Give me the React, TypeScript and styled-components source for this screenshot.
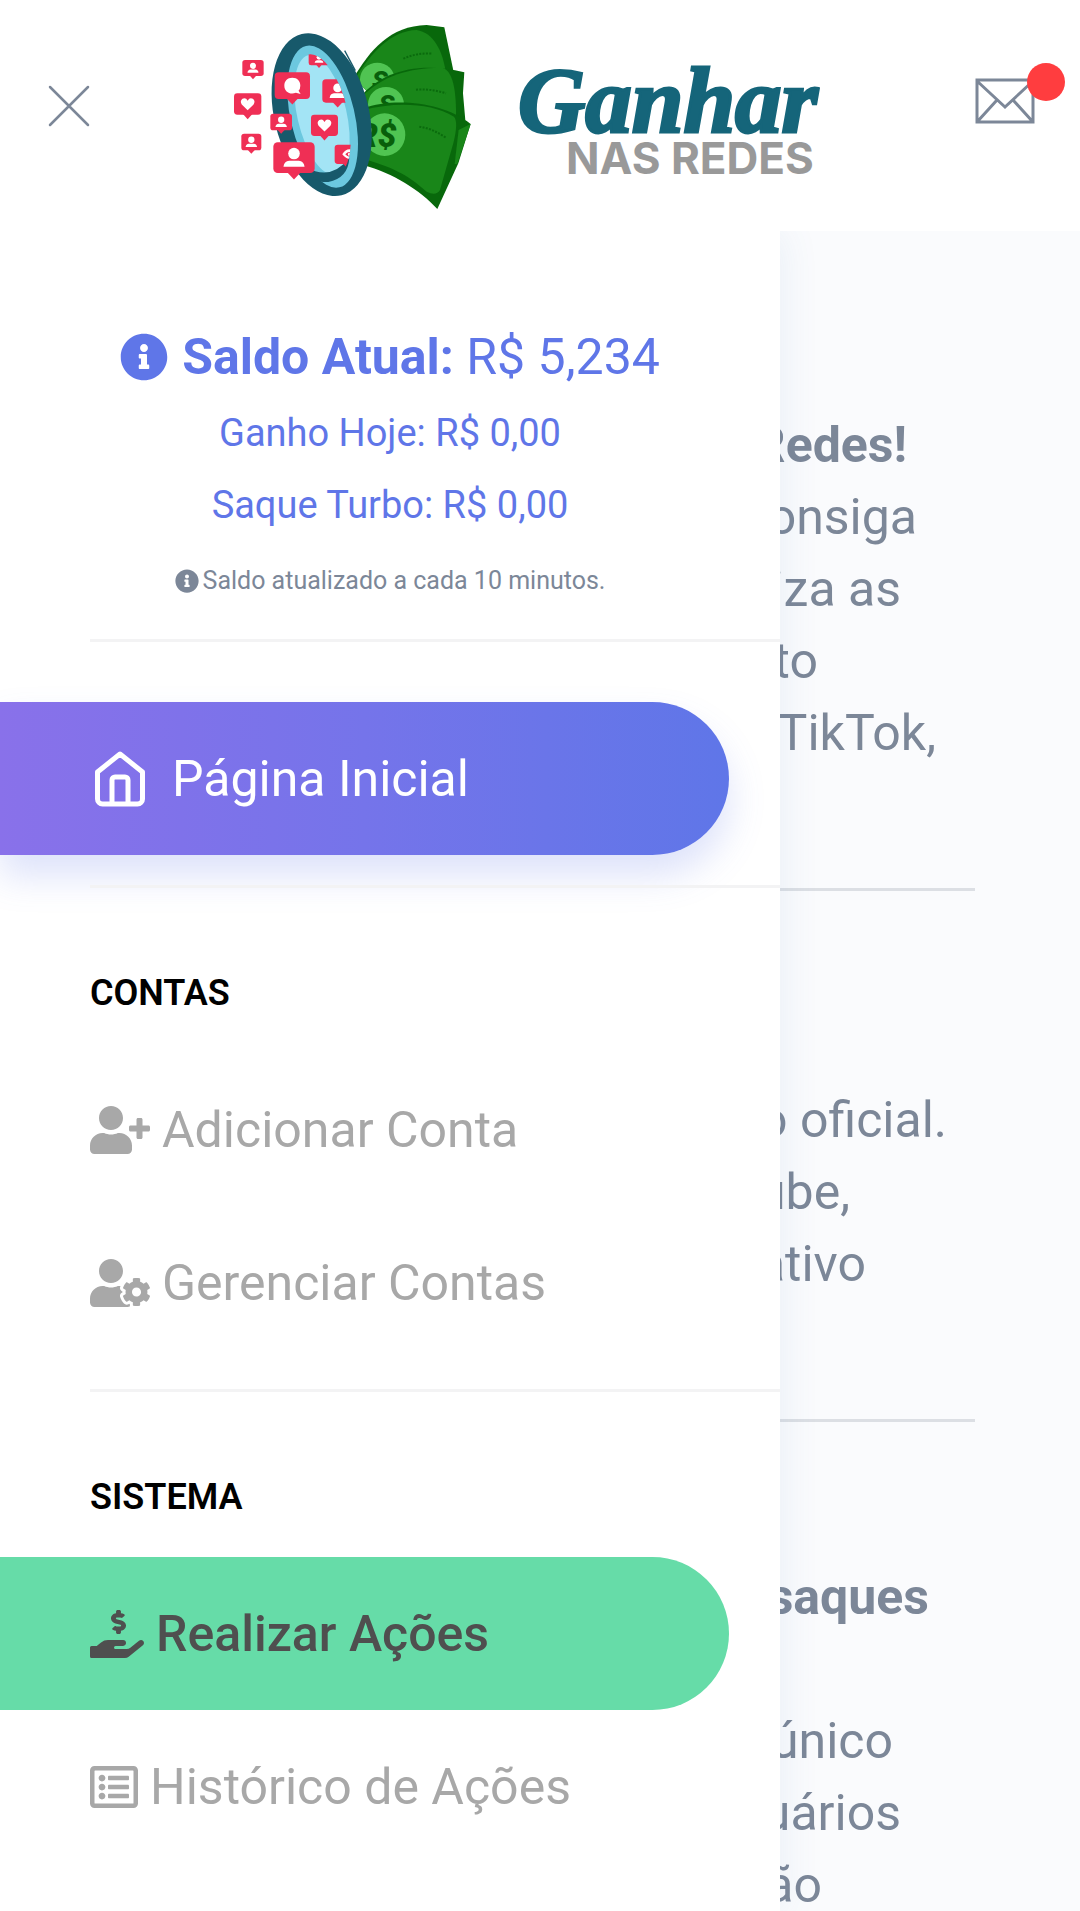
import React from "react";
import styled, { createGlobalStyle, css } from "styled-components";
import {
  FaHandHoldingUsd,
  FaInfoCircle,
  FaRegListAlt,
  FaUserCog,
  FaUserPlus,
} from "react-icons/fa";

const colors = {
  primary: "#5f76e8",
  muted: "#7c8798",
  item: "#a8a8a8",
  line: "#f3f3f4",
  teal: "#15657a",
  danger: "#ff3d3f",
  success: "#66dca8",
};

const size = { title: 50, text: 38, small: 25 };

const GlobalStyle = createGlobalStyle`
  *, *::before, *::after { box-sizing: border-box; }
  body {
    margin: 0;
    background: #fafbfd;
    color: ${colors.muted};
    font-family: Roboto, "Liberation Sans", sans-serif;
  }
`;

const Page = styled.div`
  display: flex;
  flex-direction: column;
  height: 100vh;
  overflow: hidden;
`;

const Header = styled.header`
  display: flex;
  flex: none;
  align-items: center;
  justify-content: space-between;
  height: 231px;
  padding: 0 45px 0 48px;
  background: #fff;
`;

const IconButton = styled.button<{ $lift: number }>`
  position: relative;
  display: flex;
  margin: 0 0 ${(p) => p.$lift}px;
  padding: 0;
  border: 0;
  background: none;
  color: ${colors.muted};
  cursor: pointer;
`;

const Badge = styled.span`
  position: absolute;
  top: -15px;
  right: -30px;
  width: 38px;
  height: 38px;
  border-radius: 50%;
  background: ${colors.danger};
`;

const LogoLink = styled.a`
  display: flex;
`;

const Body = styled.div`
  position: relative;
  flex: 1;
  min-height: 0;
  overflow: hidden;
`;

const Sidebar = styled.aside`
  position: absolute;
  inset: 0 auto 0 0;
  width: 780px;
  max-width: 100%;
  overflow: hidden;
  background: #fff;
  box-shadow: 3px 0 36px rgba(70, 120, 180, 0.09);
`;

const Balance = styled.section`
  display: flex;
  flex-direction: column;
  align-items: center;
  padding: 90px 0 22px;
  color: ${colors.primary};
`;

const BalanceRow = styled.p<{ $small?: boolean; $lead?: boolean }>`
  display: flex;
  align-items: center;
  gap: 14px;
  margin: 0;
  font-size: ${size.text}px;
  line-height: 72px;
  ${(p) =>
    p.$lead &&
    css`
      margin-bottom: 4px;
      font-size: ${size.title}px;
    `}
  ${(p) =>
    p.$small &&
    css`
      gap: 4px;
      margin-top: 4px;
      color: ${colors.muted};
      font-size: ${size.small}px;
    `}
`;

const Divider = styled.hr`
  height: 3px;
  margin: 0 0 0 90px;
  border: 0;
  background: ${colors.line};
`;

const Menu = styled.ul`
  margin: 0;
  padding: 0;
  list-style: none;
`;

const MenuBlock = styled.nav<{ $top?: number }>`
  padding: ${(p) => p.$top ?? 0}px 0 30px;
`;

const Heading = styled.h2`
  margin: 0;
  padding: 78px 90px 33px;
  color: #000;
  font-size: 36px;
  font-weight: 600;
  line-height: 54px;
`;

const MenuLink = styled.a<{ $tone?: "active" | "success"; $icon?: number }>`
  display: flex;
  align-items: center;
  gap: 12px;
  height: 153px;
  margin-right: 51px;
  padding-left: 90px;
  border-radius: 0 77px 77px 0;
  color: ${colors.item};
  font-size: ${size.title}px;
  text-decoration: none;

  & > svg {
    flex: none;
    width: ${(p) => p.$icon ?? 48}px;
    height: 48px;
  }
  ${(p) =>
    p.$tone === "active" &&
    css`
      gap: 22px;
      background: linear-gradient(to right, #8971ea, #7f72ea, #7574ea, #6a75e9, #5f76e8);
      box-shadow: 0 21px 36px rgba(95, 118, 232, 0.21);
      color: #fff;

      & > svg {
        height: 60px;
      }
    `}
  ${(p) =>
    p.$tone === "success" &&
    css`
      background: ${colors.success};
      color: #4f4f4f;
      font-weight: 500;
    `}
`;

const Content = styled.main`
  padding: 0 105px;
`;

const Paragraph = styled.div<{ $top: number }>`
  padding-top: ${(p) => p.$top}px;
  font-size: ${size.title}px;
  line-height: 72px;
  text-align: right;
`;

const Line = styled.div<{ $rag: number }>`
  min-height: 72px;
  padding-right: ${(p) => p.$rag}px;
`;

const Rule = styled.hr`
  height: 3px;
  margin: 119px 0 0;
  border: 0;
  background: #dcdfe4;
`;

type PinKind = "person" | "heart" | "chat" | "eye";

function Pin({ x, y, w, h, kind }: { x: number; y: number; w: number; h: number; kind: PinKind }) {
  const cx = x + w / 2;
  const cy = y + h / 2;
  const s = h / 90;
  return (
    <g>
      <rect x={x} y={y} width={w} height={h} rx={10 * s + 3} fill="#ef2f55" />
      <path d={`M${cx - 20 * s} ${y + h - 2} L${cx} ${y + h + 19 * s} L${cx + 20 * s} ${y + h - 2}Z`} fill="#ef2f55" />
      <g transform={`translate(${cx} ${cy}) scale(${s})`} fill="#fff">
        {kind === "person" && (
          <>
            <circle cy="-12" r="17" />
            <path d="M-31 27 Q-29 10 -14 9 L14 9 Q29 10 31 27Z" />
          </>
        )}
        {kind === "heart" && (
          <path d="M0 26 L-25 2 Q-34 -13 -22 -22 Q-8 -29 0 -14 Q8 -29 22 -22 Q34 -13 25 2Z" />
        )}
        {kind === "chat" && (
          <path d="M0 -27 C17 -27 27 -16 27 0 Q27 11 21 17 L28 28 L12 24 C-8 32 -27 20 -27 0 C-27 -16 -17 -27 0 -27Z" />
        )}
        {kind === "eye" && (
          <path
            fillRule="evenodd"
            d="M-22 0 Q2 -38 36 -14 L36 16 Q4 34 -22 0Z M-8 0 Q8 18 24 6 L24 -6 Q8 -18 -8 0Z M4 0 a7 7 0 1 0 14 0 a7 7 0 1 0 -14 0Z"
          />
        )}
      </g>
    </g>
  );
}

function Logo() {
  return (
    <svg width="605" height="231" viewBox="230 0 605 231" role="img" aria-label="Ganhar nas Redes">
      <defs>
        <clipPath id="glass">
          <ellipse cx="306" cy="315" rx="78" ry="186" transform="rotate(-13 306 315)" />
        </clipPath>
        <clipPath id="bill-top">
          <path d="M400 205 C450 120 510 48 620 45 L673 52 L704 200 L500 300Z" />
        </clipPath>
        <clipPath id="bill-mid">
          <path d="M420 262 C490 180 600 155 733 187 L729 250 L736 330 L440 340Z" />
        </clipPath>
      </defs>
      <g transform="translate(220 10) scale(0.3333)">
        <path d="M400 205 C450 120 510 48 620 45 L673 52 L704 200 L500 300Z" fill="#08680b" />
        <path d="M404 208 C455 125 515 62 590 60 C640 68 668 120 678 190 L500 300Z" fill="#198619" />
        <g clipPath="url(#bill-top)">
          <ellipse cx="472" cy="208" rx="52" ry="50" fill="#50c452" />
          <text x="456" y="236" fontFamily="Roboto, sans-serif" fontSize="78" fontWeight="900" fontStyle="italic" fill="#085f0b">S</text>
        </g>
        <path d="M550 146 Q590 128 636 131" fill="none" stroke="#0a6b0d" strokeWidth="6" strokeDasharray="6 4" />

        <path d="M420 262 C490 180 600 155 733 187 L729 250 L736 330 L440 340Z" fill="#08680b" />
        <path d="M424 262 C490 192 580 172 668 174 C698 182 710 240 708 330 L440 340Z" fill="#198619" />
        <g clipPath="url(#bill-mid)">
          <ellipse cx="498" cy="283" rx="54" ry="52" fill="#50c452" />
          <text x="476" y="308" fontFamily="Roboto, sans-serif" fontSize="78" fontWeight="900" fontStyle="italic" fill="#085f0b">S</text>
        </g>
        <path d="M588 239 Q634 236 678 250" fill="none" stroke="#0a6b0d" strokeWidth="6" strokeDasharray="6 4" />

        <path d="M430 295 C520 262 670 275 752 342 L715 460 L652 597 C600 540 520 490 430 465Z" fill="#08680b" />
        <path d="M716 360 L752 342 L712 462 L704 462Z" fill="#198619" />
        <path d="M430 300 C520 276 630 276 702 320 Q716 335 700 400 L660 540 Q648 560 620 545 C560 490 510 470 430 446Z" fill="#198619" />
        <ellipse cx="494" cy="374" rx="62" ry="64" fill="#50c452" />
        <text x="410" y="410" fontFamily="Roboto, sans-serif" fontSize="100" fontWeight="900" fontStyle="italic" fill="#085f0b">R$</text>
        <path d="M598 350 Q640 356 680 385" fill="none" stroke="#0a6b0d" strokeWidth="6" strokeDasharray="6 4" />

        <path d="M374 122 L406 182" stroke="#17596b" strokeWidth="4" />
        <ellipse cx="305" cy="314" rx="142" ry="249" transform="rotate(-13.9 305 314)" fill="#17596b" />
        <ellipse cx="308" cy="320" rx="96" ry="218" transform="rotate(-13.3 308 320)" fill="#6cc8df" />
        <ellipse cx="306" cy="315" rx="74" ry="184" transform="rotate(-13 306 315)" fill="#a3e4f5" />
        <path d="M258 470 Q330 515 388 445 Q384 505 325 516 Q280 520 258 470Z" fill="#17596b" />
        <g clipPath="url(#glass)">
          <Pin x={266} y={128} w={62} h={38} kind="person" />
          <Pin x={307} y={208} w={92} h={70} kind="person" />
          <Pin x={344} y={404} w={74} h={58} kind="eye" />
        </g>
        <Pin x={67} y={150} w={64} h={48} kind="person" />
        <Pin x={42} y={250} w={82} h={64} kind="heart" />
        <Pin x={64} y={371} w={60} h={50} kind="person" />
        <Pin x={164} y={187} w={106} h={80} kind="chat" />
        <Pin x={151} y={311} w={65} h={50} kind="person" />
        <Pin x={273} y={314} w={81} h={64} kind="heart" />
        <Pin x={160} y={397} w={124} h={92} kind="person" />
      </g>
      <text x="518" y="132" fontFamily="'Liberation Serif', serif" fontSize="93" fontWeight="700" fontStyle="italic" fill={colors.teal} stroke={colors.teal} strokeWidth="3">
        Ganhar
      </text>
      <text x="566" y="174" fontFamily="Inter, sans-serif" fontSize="44" fontWeight="700" fill="#999">
        NAS REDES
      </text>
    </svg>
  );
}

function CloseIcon() {
  return (
    <svg width="42" height="42" viewBox="0 0 42 42" fill="none" stroke="currentColor" strokeWidth="2.5" strokeLinecap="round">
      <path d="M2 2 L40 40 M40 2 L2 40" />
    </svg>
  );
}

function MailIcon() {
  return (
    <svg width="60" height="46" viewBox="0 0 60 46" fill="none" stroke="currentColor" strokeWidth="3">
      <path d="M2 2 H58 V44 H2Z M2 3 L30 29 L58 3 M2 44 L22 22 M58 44 L38 22" />
    </svg>
  );
}

function HomeIcon() {
  return (
    <svg viewBox="0 0 60 60" fill="none" stroke="currentColor" strokeWidth="5" strokeLinejoin="round" aria-hidden="true">
      <path d="M7.500 23 L30 5 L52.500 23 V50 a5 5 0 0 1 -5 5 H12.500 a5 5 0 0 1 -5 -5Z" />
      <path d="M22 55 V31 a3 3 0 0 1 3 -3 H35 a3 3 0 0 1 3 3 V55" />
    </svg>
  );
}

export default function App() {
  return (
    <Page>
      <GlobalStyle />
      <Header>
        <IconButton type="button" aria-label="Fechar menu" $lift={20}>
          <CloseIcon />
        </IconButton>
        <LogoLink href="#inicio">
          <Logo />
        </LogoLink>
        <IconButton type="button" aria-label="Mensagens" $lift={30}>
          <MailIcon />
          <Badge />
        </IconButton>
      </Header>

      <Body>
        <Content>
          <Paragraph $top={178}>
            <Line $rag={68}><strong>Redes!</strong></Line>
            <Line $rag={58}>consiga</Line>
            <Line $rag={74}>iza as</Line>
            <Line $rag={157}>to</Line>
            <Line $rag={39}>TikTok,</Line>
          </Paragraph>
          <Rule />
          <Paragraph $top={193}>
            <Line $rag={28}>o oficial.</Line>
            <Line $rag={125}>ube,</Line>
            <Line $rag={109}>ativo</Line>
          </Paragraph>
          <Rule />
          <Paragraph $top={139}>
            <Line $rag={46}><strong>saques</strong></Line>
            <Line $rag={0} />
            <Line $rag={82}>único</Line>
            <Line $rag={74}>uários</Line>
            <Line $rag={153}>ão</Line>
          </Paragraph>
        </Content>

        <Sidebar>
          <Balance>
            <BalanceRow $lead>
              <FaInfoCircle size={48} />
              <span><strong>Saldo Atual:</strong> R$ 5,234</span>
            </BalanceRow>
            <BalanceRow>Ganho Hoje: R$ 0,00</BalanceRow>
            <BalanceRow>Saque Turbo: R$ 0,00</BalanceRow>
            <BalanceRow $small>
              <FaInfoCircle size={24} />
              Saldo atualizado a cada 10 minutos.
            </BalanceRow>
          </Balance>
          <Divider />
          <MenuBlock $top={60} aria-label="Principal">
            <Menu>
              <li>
                <MenuLink href="#inicio" $tone="active" $icon={60}>
                  <HomeIcon />
                  Página Inicial
                </MenuLink>
              </li>
            </Menu>
          </MenuBlock>
          <Divider />
          <MenuBlock aria-label="Contas">
            <Heading>CONTAS</Heading>
            <Menu>
              <li>
                <MenuLink href="#adicionar" $icon={60}>
                  <FaUserPlus />
                  Adicionar Conta
                </MenuLink>
              </li>
              <li>
                <MenuLink href="#gerenciar" $icon={60}>
                  <FaUserCog />
                  Gerenciar Contas
                </MenuLink>
              </li>
            </Menu>
          </MenuBlock>
          <Divider />
          <MenuBlock aria-label="Sistema">
            <Heading>SISTEMA</Heading>
            <Menu>
              <li>
                <MenuLink href="#acoes" $tone="success" $icon={54}>
                  <FaHandHoldingUsd />
                  Realizar Ações
                </MenuLink>
              </li>
              <li>
                <MenuLink href="#historico">
                  <FaRegListAlt />
                  Histórico de Ações
                </MenuLink>
              </li>
            </Menu>
          </MenuBlock>
        </Sidebar>
      </Body>
    </Page>
  );
}
